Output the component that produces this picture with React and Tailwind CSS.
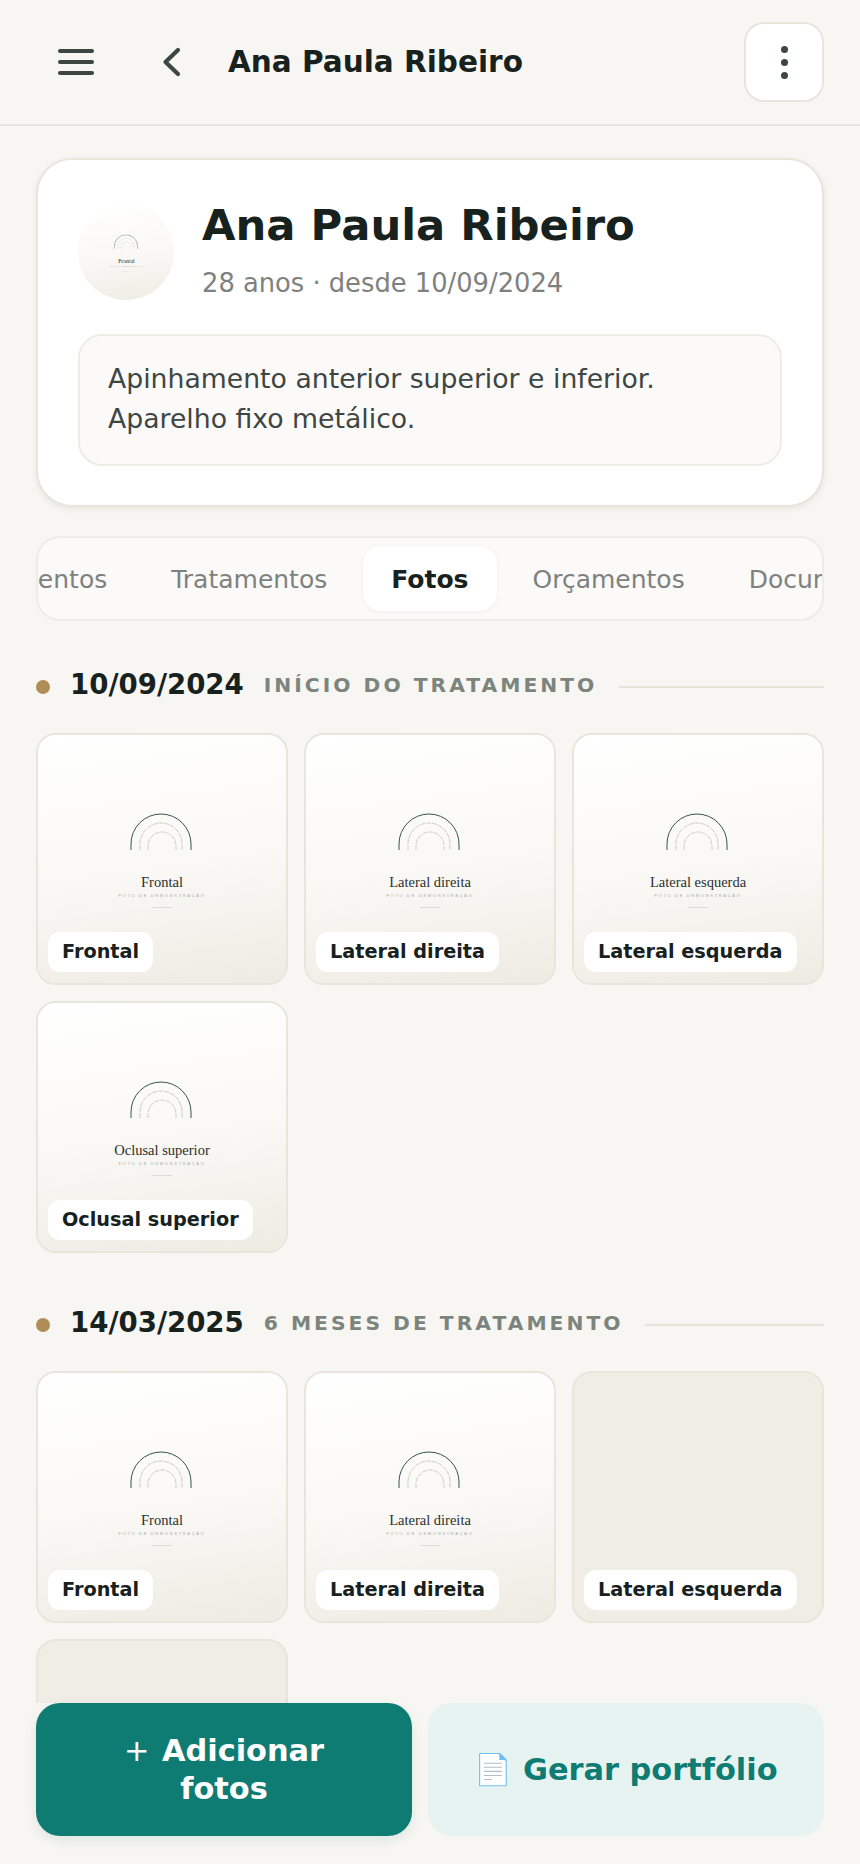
const tabs = ['Atendimentos', 'Tratamentos', 'Fotos', 'Orçamentos', 'Documentos']

const sections = [
  {
    date: '10/09/2024',
    label: 'INÍCIO DO TRATAMENTO',
    photos: [
      { name: 'Frontal', ready: true },
      { name: 'Lateral direita', ready: true },
      { name: 'Lateral esquerda', ready: true },
      { name: 'Oclusal superior', ready: true },
    ],
  },
  {
    date: '14/03/2025',
    label: '6 MESES DE TRATAMENTO',
    photos: [
      { name: 'Frontal', ready: true },
      { name: 'Lateral direita', ready: true },
      { name: 'Lateral esquerda', ready: false },
      { name: 'Oclusal superior', ready: false },
    ],
  },
]

function DemoPhoto({ name }) {
  return (
    <div className="flex h-[248px] w-[248px] flex-col items-center bg-[linear-gradient(172deg,#ffffff_0%,#f9f8f5_55%,#eeebe2_100%)] pt-[78px]">
      <svg width="64" height="38" viewBox="0 0 64 38" fill="none">
        <path d="M1 37V31A30 30 0 0 1 61 31V37" stroke="#34544c" strokeWidth="1" />
        <path d="M10 37V31A21 21 0 0 1 52 31V37" stroke="#bfb6a4" strokeWidth="0.7" strokeDasharray="5 1" />
        <path d="M18 37V33A14 14 0 0 1 46 33V37" stroke="#b9bab4" strokeWidth="0.7" strokeDasharray="5 1" />
      </svg>
      <p className="mt-[21px] text-[14.5px] leading-[20px] text-[#2a2f2d] [font-family:'Liberation_Serif',serif]">{name}</p>
      <p className="mt-[1px] text-[4px] leading-[6px] tracking-[1.7px] text-[#a9aaa5] [font-family:'Liberation_Sans',sans-serif]">FOTO DE DEMONSTRAÇÃO</p>
      <div className="mt-[8px] h-px w-[20px] bg-[#dedcd4]" />
    </div>
  )
}

function PhotoCard({ photo }) {
  return (
    <div className="relative aspect-square overflow-hidden rounded-[20px] border-2 border-[#e7e5dc] bg-[#f0ede5]">
      {photo.ready && <DemoPhoto name={photo.name} />}
      <span className="absolute bottom-[11px] left-[10px] flex h-[40px] items-center rounded-[12px] bg-white px-[14px] text-[19.25px] font-bold text-[#17211e]">
        {photo.name}
      </span>
    </div>
  )
}

function Section({ section }) {
  return (
    <section className="mb-[50px]">
      <div className="mb-[28px] flex h-[40px] items-center">
        <span className="mt-[4px] h-[14px] w-[14px] shrink-0 rounded-full bg-[#b08d57]" />
        <h2 className="ml-[20px] text-[27.6px] font-bold text-[#17211e]">{section.date}</h2>
        <span className="ml-[20px] text-[20.3px] font-bold tracking-[3px] text-[#7c857d]">{section.label}</span>
        <span className="ml-[22px] mt-[4px] h-[2px] flex-1 bg-[#e5e4da]" />
      </div>
      <div className="grid grid-cols-3 gap-[16px]">
        {section.photos.map((photo) => (
          <PhotoCard key={photo.name} photo={photo} />
        ))}
      </div>
    </section>
  )
}

export default function App() {
  return (
    <div className="relative h-[1864px] w-[860px] overflow-hidden bg-[#f8f6f2] [font-family:'DejaVu_Sans',sans-serif]">
      <header className="flex h-[126px] items-center border-b-2 border-[#e7e5df] pl-[58px] pr-[36px]">
        <button className="flex w-[36px] flex-col gap-[7px]">
          <span className="h-[4px] rounded-full bg-[#3c4743]" />
          <span className="h-[4px] rounded-full bg-[#3c4743]" />
          <span className="h-[4px] rounded-full bg-[#3c4743]" />
        </button>
        <svg className="ml-[68px]" width="19" height="30" viewBox="0 0 19 30" fill="none">
          <path d="M16 3 3.5 15 16 27" stroke="#3c4743" strokeWidth="4.2" strokeLinecap="round" strokeLinejoin="round" />
        </svg>
        <h1 className="ml-[47px] flex-1 text-[29.5px] font-bold text-[#17211e]">Ana Paula Ribeiro</h1>
        <button className="flex h-[80px] w-[80px] flex-col items-center justify-center gap-[6px] rounded-[20px] border-2 border-[#e7e5dc] bg-white">
          <span className="h-[7px] w-[7px] rounded-full bg-[#3e4643]" />
          <span className="h-[7px] w-[7px] rounded-full bg-[#3e4643]" />
          <span className="h-[7px] w-[7px] rounded-full bg-[#3e4643]" />
        </button>
      </header>

      <main className="px-[36px] pt-[32px]">
        <div className="rounded-[36px] border-2 border-[#e7e5dc] bg-white px-[40px] pb-[39px] pt-[37px] shadow-[0_2px_6px_rgba(40,40,30,0.08)]">
          <div className="flex items-start gap-[28px]">
            <div className="mt-[7px] h-[96px] w-[96px] shrink-0 overflow-hidden rounded-full">
              <div className="origin-top-left scale-[0.39]">
                <DemoPhoto name="Frontal" />
              </div>
            </div>
            <div>
              <h2 className="text-[43.3px] font-bold leading-[56px] text-[#17211e]">Ana Paula Ribeiro</h2>
              <p className="mt-[12px] text-[25.75px] leading-[36px] text-[#7e827f]">28 anos · desde 10/09/2024</p>
            </div>
          </div>
          <div className="mt-[33px] rounded-[24px] border-2 border-[#eeece4] bg-[#fbfaf8] px-[28px] pb-[25px] pt-[23px] text-[26.7px] leading-[40px] text-[#3e4643]">
            <p>Apinhamento anterior superior e inferior.</p>
            <p>Aparelho fixo metálico.</p>
          </div>
        </div>

        <div className="mt-[29px] flex h-[85px] items-center gap-[8px] overflow-hidden rounded-[24px] border-2 border-[#eeece5] bg-[#fbfaf8]">
          {tabs.map((tab, i) => (
            <span
              key={tab}
              className={`flex h-[65px] shrink-0 items-center rounded-[18px] px-[28px] pt-[3px] text-[25px] ${i === 0 ? 'ml-[-133px]' : ''} ${tab === 'Fotos' ? 'bg-white font-bold text-[#17211e] shadow-[0_1px_4px_rgba(40,40,30,0.06)]' : 'text-[#7e827f]'}`}
            >
              {tab}
            </span>
          ))}
        </div>

        <div className="mt-[44px]">
          {sections.map((section) => (
            <Section key={section.date} section={section} />
          ))}
        </div>
      </main>

      <div className="absolute inset-x-0 bottom-0 flex gap-[16px] bg-[#f8f6f2] px-[36px] pb-[28px]">
        <button className="h-[133px] w-[376px] rounded-[24px] bg-[#0f7c73] px-[60px] text-[30.4px] font-bold leading-[38px] text-white shadow-[0_4px_12px_rgba(15,124,115,0.12)]">
          <span className="mr-[2px] font-normal">+</span> Adicionar fotos
        </button>
        <button className="h-[133px] flex-1 rounded-[24px] bg-[#e6f3f1] text-[30.4px] font-bold text-[#0f7c73]">
          📄 Gerar portfólio
        </button>
      </div>
    </div>
  )
}
